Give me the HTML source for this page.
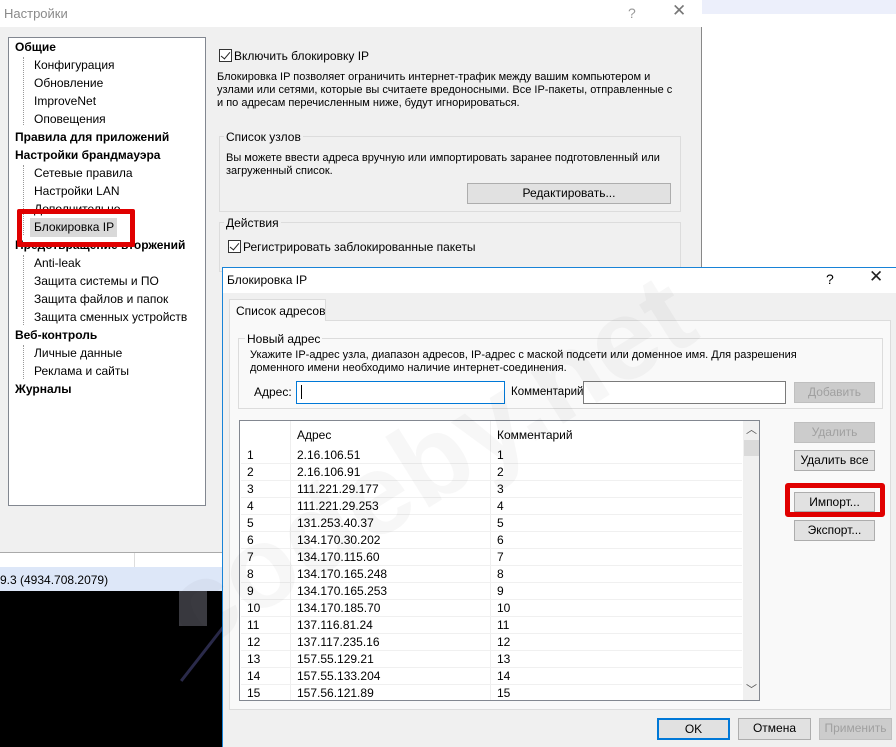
<!DOCTYPE html>
<html><head><meta charset="utf-8"><style>
*{margin:0;padding:0;box-sizing:border-box}
body{width:896px;height:747px;position:relative;overflow:hidden;background:#fff;font-family:"Liberation Sans","DejaVu Sans",sans-serif;font-size:12px;color:#000}
.a{position:absolute;white-space:nowrap}
.t{position:absolute;white-space:nowrap;line-height:14px}
.b{font-weight:bold}
.btn{position:absolute;background:#e1e1e1;border:1px solid #adadad;text-align:center;line-height:19px}
.dis{color:#a0a0a0;background:#ccc;border-color:#bfbfbf}
.grp{position:absolute;border:1px solid #dcdcdc}
.lbl{position:absolute;background:#f0f0f0;padding:0 2px;line-height:14px}
.cb{position:absolute;width:13px;height:13px;border:1px solid #333;background:#fff}
.cb:after{content:"";position:absolute;left:3px;top:0px;width:4px;height:8px;border:solid #222;border-width:0 1.5px 1.5px 0;transform:rotate(40deg)}
.dots{position:absolute;border-left:1px dotted #999}
.row{position:absolute;left:1px;width:501px;height:17px;border-bottom:1px solid #f0f0f0;line-height:17px}
.row span{position:absolute}
</style></head><body>
<div class="a" style="left:702px;top:0;width:194px;height:14px;background:#eceffb"></div>
<div class="a" style="left:0;top:0;width:702px;height:553px;background:#f0f0f0;border-right:1px solid #888"></div>
<div class="a" style="left:0;top:0;width:702px;height:27px;background:#fff"></div>
<div class="t" style="left:4px;top:7px;color:#8a8a8a;font-size:13px">Настройки</div>
<div class="t" style="left:628px;top:6px;color:#999;font-size:14px">?</div>
<div class="t" style="left:672px;top:4px;color:#777;font-size:17px">✕</div>
<div class="a" style="left:8px;top:37px;width:198px;height:469px;background:#fff;border:1px solid #828790"></div>
<div class="dots" style="left:23px;top:57px;height:68px"></div>
<div class="dots" style="left:23px;top:165px;height:70px"></div>
<div class="dots" style="left:23px;top:255px;height:70px"></div>
<div class="dots" style="left:23px;top:345px;height:34px"></div>
<div class="a" style="left:30px;top:218px;width:87px;height:19px;background:#d9d9d9"></div>
<div class="t b" style="left:15px;top:40px">Общие</div>
<div class="t" style="left:34px;top:58px">Конфигурация</div>
<div class="t" style="left:34px;top:76px">Обновление</div>
<div class="t" style="left:34px;top:94px">ImproveNet</div>
<div class="t" style="left:34px;top:112px">Оповещения</div>
<div class="t b" style="left:15px;top:130px">Правила для приложений</div>
<div class="t b" style="left:15px;top:148px">Настройки брандмауэра</div>
<div class="t" style="left:34px;top:166px">Сетевые правила</div>
<div class="t" style="left:34px;top:184px">Настройки LAN</div>
<div class="t" style="left:34px;top:202px">Дополнительно</div>
<div class="t" style="left:34px;top:220px">Блокировка IP</div>
<div class="t b" style="left:15px;top:238px">Предотвращение вторжений</div>
<div class="t" style="left:34px;top:256px">Anti-leak</div>
<div class="t" style="left:34px;top:274px">Защита системы и ПО</div>
<div class="t" style="left:34px;top:292px">Защита файлов и папок</div>
<div class="t" style="left:34px;top:310px">Защита сменных устройств</div>
<div class="t b" style="left:15px;top:328px">Веб-контроль</div>
<div class="t" style="left:34px;top:346px">Личные данные</div>
<div class="t" style="left:34px;top:364px">Реклама и сайты</div>
<div class="t b" style="left:15px;top:382px">Журналы</div>
<div class="a" style="left:17px;top:209px;width:118px;height:38px;border:5px solid #e00000;border-radius:2px"></div>
<div class="cb" style="left:219px;top:49px"></div>
<div class="t" style="left:234px;top:49px">Включить блокировку IP</div>
<div class="t" style="left:217px;top:71px;font-size:11px;line-height:13px">Блокировка IP позволяет ограничить интернет-трафик между вашим компьютером и<br>узлами или сетями, которые вы считаете вредоносными. Все IP-пакеты, отправленные с<br>и по адресам перечисленным ниже, будут игнорироваться.</div>
<div class="grp" style="left:219px;top:136px;width:462px;height:76px"></div>
<div class="lbl" style="left:224px;top:130px">Список узлов</div>
<div class="t" style="left:226px;top:152px;font-size:11px;line-height:13px">Вы можете ввести адреса вручную или импортировать заранее подготовленный или<br>загруженный список.</div>
<div class="btn" style="left:467px;top:183px;width:204px;height:21px">Редактировать...</div>
<div class="grp" style="left:219px;top:222px;width:462px;height:50px"></div>
<div class="lbl" style="left:224px;top:216px">Действия</div>
<div class="cb" style="left:228px;top:240px"></div>
<div class="t" style="left:243px;top:240px">Регистрировать заблокированные пакеты</div>
<div class="a" style="left:0;top:552px;width:222px;height:1px;background:#aaa"></div>
<div class="a" style="left:0;top:553px;width:222px;height:14px;background:#fff"></div>
<div class="a" style="left:134px;top:553px;width:1px;height:14px;background:#ddd"></div>
<div class="a" style="left:0;top:567px;width:222px;height:24px;background:#dde7f8"></div>
<div class="t" style="left:0;top:573px">9.3 (4934.708.2079)</div>
<div class="a" style="left:0;top:591px;width:222px;height:156px;background:#000"></div>
<div class="a" style="left:179px;top:591px;width:28px;height:35px;background:#3a3a40"></div>
<div class="a" style="left:180px;top:680px;width:150px;height:3px;background:#2a2a4a;transform:rotate(-52deg);transform-origin:0 0"></div>
<div class="a" style="left:222px;top:267px;width:674px;height:480px;background:#f0f0f0;border:1px solid #1883d7;border-bottom:none;border-right:none"></div>
<div class="a" style="left:223px;top:268px;width:673px;height:25px;background:#fff"></div>
<div class="t" style="left:227px;top:273px">Блокировка IP</div>
<div class="t" style="left:826px;top:272px;font-size:14px">?</div>
<div class="t" style="left:869px;top:270px;font-size:17px;color:#222">✕</div>
<div class="a" style="left:229px;top:320px;width:662px;height:390px;background:#f9f9f9;border:1px solid #dcdcdc"></div>
<div class="a" style="left:229px;top:299px;width:97px;height:22px;background:#f9f9f9;border:1px solid #dcdcdc;border-bottom:none"></div>
<div class="t" style="left:236px;top:304px">Список адресов</div>
<div class="grp" style="left:238px;top:338px;width:645px;height:71px"></div>
<div class="lbl" style="left:245px;top:332px;background:#f9f9f9">Новый адрес</div>
<div class="t" style="left:250px;top:349px;font-size:11px;line-height:13px">Укажите IP-адрес узла, диапазон адресов, IP-адрес с маской подсети или доменное имя. Для разрешения<br>доменного имени необходимо наличие интернет-соединения.</div>
<div class="t" style="left:254px;top:385px">Адрес:</div>
<div class="a" style="left:296px;top:381px;width:209px;height:23px;background:#fff;border:1px solid #0078d7"></div>
<div class="a" style="left:301px;top:385px;width:1px;height:14px;background:#000"></div>
<div class="t" style="left:511px;top:385px;font-size:11.5px">Комментарий</div>
<div class="a" style="left:583px;top:381px;width:203px;height:23px;background:#fff;border:1px solid #7a7a7a"></div>
<div class="btn dis" style="left:794px;top:382px;width:81px;height:21px">Добавить</div>
<div class="a" style="left:239px;top:420px;width:521px;height:281px;background:#fff;border:1px solid #828790;overflow:hidden">
<div class="a" style="left:50px;top:0;width:1px;height:281px;background:#eee"></div>
<div class="a" style="left:250px;top:0;width:1px;height:281px;background:#eee"></div>
<div class="t" style="left:57px;top:7px">Адрес</div>
<div class="t" style="left:257px;top:7px">Комментарий</div>
<div class="a" style="left:503px;top:0;width:17px;height:281px;background:#f0f0f0"></div>
<div class="t" style="left:506px;top:2px;color:#555;font-size:11px">︿</div>
<div class="a" style="left:504px;top:19px;width:15px;height:16px;background:#dadada"></div>
<div class="t" style="left:506px;top:262px;color:#555;font-size:11px">﹀</div>
<div class="row" style="top:26px"><span style="left:6px">1</span><span style="left:56px">2.16.106.51</span><span style="left:256px">1</span></div>
<div class="row" style="top:43px"><span style="left:6px">2</span><span style="left:56px">2.16.106.91</span><span style="left:256px">2</span></div>
<div class="row" style="top:60px"><span style="left:6px">3</span><span style="left:56px">111.221.29.177</span><span style="left:256px">3</span></div>
<div class="row" style="top:77px"><span style="left:6px">4</span><span style="left:56px">111.221.29.253</span><span style="left:256px">4</span></div>
<div class="row" style="top:94px"><span style="left:6px">5</span><span style="left:56px">131.253.40.37</span><span style="left:256px">5</span></div>
<div class="row" style="top:111px"><span style="left:6px">6</span><span style="left:56px">134.170.30.202</span><span style="left:256px">6</span></div>
<div class="row" style="top:128px"><span style="left:6px">7</span><span style="left:56px">134.170.115.60</span><span style="left:256px">7</span></div>
<div class="row" style="top:145px"><span style="left:6px">8</span><span style="left:56px">134.170.165.248</span><span style="left:256px">8</span></div>
<div class="row" style="top:162px"><span style="left:6px">9</span><span style="left:56px">134.170.165.253</span><span style="left:256px">9</span></div>
<div class="row" style="top:179px"><span style="left:6px">10</span><span style="left:56px">134.170.185.70</span><span style="left:256px">10</span></div>
<div class="row" style="top:196px"><span style="left:6px">11</span><span style="left:56px">137.116.81.24</span><span style="left:256px">11</span></div>
<div class="row" style="top:213px"><span style="left:6px">12</span><span style="left:56px">137.117.235.16</span><span style="left:256px">12</span></div>
<div class="row" style="top:230px"><span style="left:6px">13</span><span style="left:56px">157.55.129.21</span><span style="left:256px">13</span></div>
<div class="row" style="top:247px"><span style="left:6px">14</span><span style="left:56px">157.55.133.204</span><span style="left:256px">14</span></div>
<div class="row" style="top:264px"><span style="left:6px">15</span><span style="left:56px">157.56.121.89</span><span style="left:256px">15</span></div>
</div>
<div class="btn dis" style="left:794px;top:422px;width:81px;height:21px">Удалить</div>
<div class="btn" style="left:794px;top:450px;width:81px;height:21px">Удалить все</div>
<div class="btn" style="left:794px;top:492px;width:81px;height:20px">Импорт...</div>
<div class="a" style="left:785px;top:483px;width:100px;height:34px;border:5px solid #e00000;border-radius:3px"></div>
<div class="btn" style="left:794px;top:520px;width:81px;height:21px">Экспорт...</div>
<div class="btn" style="left:657px;top:718px;width:73px;height:22px;border:2px solid #0078d7;line-height:18px">OK</div>
<div class="btn" style="left:738px;top:718px;width:73px;height:22px">Отмена</div>
<div class="btn dis" style="left:819px;top:718px;width:73px;height:22px">Применить</div>
<div class="a b" style="left:205px;top:555px;font-size:115px;line-height:115px;color:rgba(0,0,0,0.03);transform:rotate(-32deg);transform-origin:0 100%">codeby.net</div>
</body></html>
